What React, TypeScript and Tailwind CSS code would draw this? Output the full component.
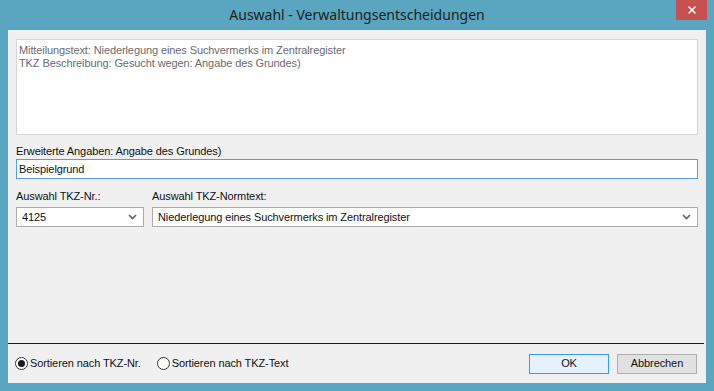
import { X } from 'lucide-react';

function Chevron() {
  return (
    <svg width="9" height="6" viewBox="0 0 9 6" className="shrink-0">
      <path d="M1 1 L4.5 4.5 L8 1" fill="none" stroke="#606060" strokeWidth="1.6" />
    </svg>
  );
}

function Select({ value, className }: { value: string; className: string }) {
  return (
    <div
      className={`h-[20px] flex items-center justify-between bg-white border border-[#acacac] pl-[5px] pr-[6px] ${className}`}
    >
      <span>{value}</span>
      <Chevron />
    </div>
  );
}

function Radio({ checked, label }: { checked?: boolean; label: string }) {
  return (
    <label className="flex items-center gap-[2px]">
      <span className="w-[13px] h-[13px] rounded-full border border-[#333] bg-white flex items-center justify-center">
        {checked && <span className="w-[7px] h-[7px] rounded-full bg-[#1a1a1a]" />}
      </span>
      <span>{label}</span>
    </label>
  );
}

export default function App() {
  return (
    <div
      className="w-[714px] h-[391px] bg-[#5aa5bf] flex flex-col text-[11px] tracking-[-0.1px] text-[#111]"
      style={{ fontFamily: '"Liberation Sans", Arial, sans-serif' }}
    >
      <div className="h-[30px] relative flex items-center justify-center">
        <span
          className="text-[14px] tracking-normal text-[#1e1e1e] -mt-[1px]"
          style={{ fontFamily: '"Noto Sans", "Open Sans", sans-serif' }}
        >
          Auswahl - Verwaltungsentscheidungen
        </span>
        <button className="absolute top-0 right-[7px] w-[31px] h-[20px] bg-[#c75050] flex items-center justify-center">
          <X size={12} strokeWidth={3} className="text-white" />
        </button>
      </div>

      <div className="flex-1 mx-[8px] mb-[8px] bg-[#f0f0f0] flex flex-col">
        <div className="px-[8px] pt-[9px] flex flex-col">
          <div className="h-[96px] bg-white border border-[#d6d6d6] px-[2px] pt-[4px] text-[#6a6a72] leading-[13px]">
            <div>Mitteilungstext: Niederlegung eines Suchvermerks im Zentralregister</div>
            <div>TKZ Beschreibung: Gesucht wegen: Angabe des Grundes)</div>
          </div>

          <div className="mt-[9px] h-[15px] leading-[15px]">Erweiterte Angaben: Angabe des Grundes)</div>
          <div className="h-[20px] bg-white border border-[#569de5] px-[2px] flex items-center">
            Beispielgrund
          </div>

          <div className="mt-[10px] flex gap-[8px]">
            <div className="w-[128px] flex flex-col">
              <div className="h-[18px] leading-[15px]">Auswahl TKZ-Nr.:</div>
              <Select value="4125" className="w-full" />
            </div>
            <div className="flex-1 flex flex-col">
              <div className="h-[18px] leading-[15px]">Auswahl TKZ-Normtext:</div>
              <Select value="Niederlegung eines Suchvermerks im Zentralregister" className="w-full" />
            </div>
          </div>
        </div>

        <div className="flex-1" />
        <div className="h-[1px] bg-[#1c1c1c] mr-[2px]" />
        <div className="h-[39px] flex items-center pl-[7px] pr-[9px]">
          <div className="flex items-center gap-[16px]">
            <Radio checked label="Sortieren nach TKZ-Nr." />
            <Radio label="Sortieren nach TKZ-Text" />
          </div>
          <div className="flex-1" />
          <div className="flex gap-[8px]">
            <button className="w-[80px] h-[20px] bg-[#e5f1fb] border border-[#3399ff] text-[#111]">OK</button>
            <button className="w-[80px] h-[20px] bg-[#e1e1e1] border border-[#adadad] text-[#111]">Abbrechen</button>
          </div>
        </div>
      </div>
    </div>
  );
}
